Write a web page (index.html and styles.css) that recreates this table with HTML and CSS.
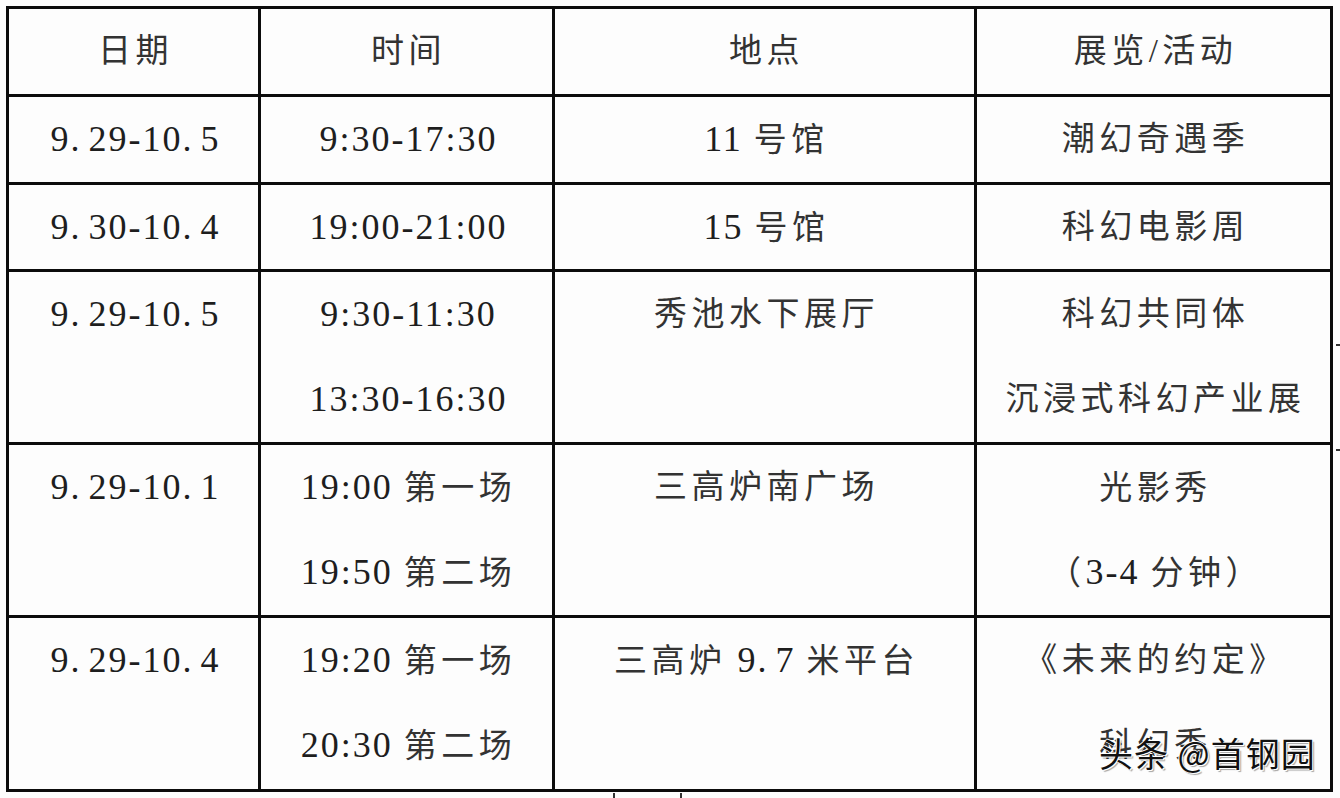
FILE: index.html
```html
<!DOCTYPE html>
<html lang="zh-CN">
<head>
<meta charset="utf-8">
<title>活动安排</title>
<link rel="stylesheet" href="styles.css">
</head>
<body>
<div class="sheet">
  <table class="schedule">
    <colgroup>
      <col class="c-date">
      <col class="c-time">
      <col class="c-place">
      <col class="c-event">
    </colgroup>
    <tr class="r-head">
      <td class="cjk">日期</td>
      <td class="cjk">时间</td>
      <td class="cjk">地点</td>
      <td class="cjk">展览/活动</td>
    </tr>
    <tr class="r-single">
      <td>9<span class="p">.</span>29-10<span class="p">.</span>5</td>
      <td>9:30-17:30</td>
      <td>11 <span class="cjk">号馆</span></td>
      <td class="cjk">潮幻奇遇季</td>
    </tr>
    <tr class="r-short">
      <td>9<span class="p">.</span>30-10<span class="p">.</span>4</td>
      <td>19:00-21:00</td>
      <td>15 <span class="cjk">号馆</span></td>
      <td class="cjk">科幻电影周</td>
    </tr>
    <tr class="r-double">
      <td>9<span class="p">.</span>29-10<span class="p">.</span>5</td>
      <td>9:30-11:30<br>13:30-16:30</td>
      <td class="cjk">秀池水下展厅</td>
      <td class="cjk">科幻共同体<br>沉浸式科幻产业展</td>
    </tr>
    <tr class="r-double">
      <td>9<span class="p">.</span>29-10<span class="p">.</span>1</td>
      <td>19:00 <span class="cjk">第一场</span><br>19:50 <span class="cjk">第二场</span></td>
      <td class="cjk">三高炉南广场</td>
      <td><span class="cjk">光影秀</span><br><span class="cjk">（</span>3-4 <span class="cjk">分钟）</span></td>
    </tr>
    <tr class="r-last">
      <td>9<span class="p">.</span>29-10<span class="p">.</span>4</td>
      <td>19:20 <span class="cjk">第一场</span><br>20:30 <span class="cjk">第二场</span></td>
      <td><span class="cjk">三高炉</span> 9<span class="p">.</span>7 <span class="cjk">米平台</span></td>
      <td class="cjk">《未来的约定》<br>科幻秀</td>
    </tr>
  </table>
  <div class="watermark">头条 @首钢园</div>
  <span class="tick tick-r1"></span>
  <span class="tick tick-r2"></span>
  <span class="tick-b tick-b1"></span>
  <span class="tick-b tick-b2"></span>
</div>
</body>
</html>
```
FILE: styles.css
```css
html, body {
  margin: 0;
  padding: 0;
  background: #fdfdfd;
}

.sheet {
  position: relative;
  width: 1340px;
  height: 798px;
  overflow: hidden;
}

.schedule {
  border-collapse: collapse;
  table-layout: fixed;
  margin: 6px 0 0 6px;
  font-family: "Liberation Serif", "Noto Sans CJK SC", serif;
  font-size: 36px;
  color: #1e1e1e;
  letter-spacing: 2px;
}

.cjk {
  font-size: 33px;
  letter-spacing: 4.5px;
  color: #333;
}

span.cjk,
.p {
  line-height: 1;
}

.c-date { width: 252px; }
.c-time { width: 294px; }
.c-place { width: 422px; }
.c-event { width: 356px; }

.schedule td {
  border: 3px solid #0c0c0c;
  padding: 0 0 0 4px;
  text-align: center;
  vertical-align: top;
  line-height: 84px;
  white-space: nowrap;
  overflow: hidden;
}

.r-head td { height: 84.5px; }
.r-single td { height: 85px; }
.r-short td { height: 84px; }
.r-double td { height: 170px; }
.r-last td { height: 171px; }

.r-double td,
.r-last td {
  line-height: 85px;
}

.p {
  margin-right: 7px;
}

.watermark {
  position: absolute;
  left: 1099px;
  top: 733px;
  font-family: "Noto Sans CJK SC", sans-serif;
  font-size: 34px;
  line-height: 40px;
  color: #111;
  letter-spacing: 1px;
  text-shadow: 1px 1px 0 #fff, -1px 0 0 #fff, 0 -1px 0 #fff, 2px 2px 1px rgba(0,0,0,0.35);
}

.tick {
  position: absolute;
  left: 1336px;
  width: 4px;
  height: 2px;
  background: #333;
}
.tick-r1 { top: 344px; }
.tick-r2 { top: 449px; }

.tick-b {
  position: absolute;
  top: 793px;
  width: 2px;
  height: 5px;
  background: #333;
}
.tick-b1 { left: 613px; }
.tick-b2 { left: 680px; }
```
